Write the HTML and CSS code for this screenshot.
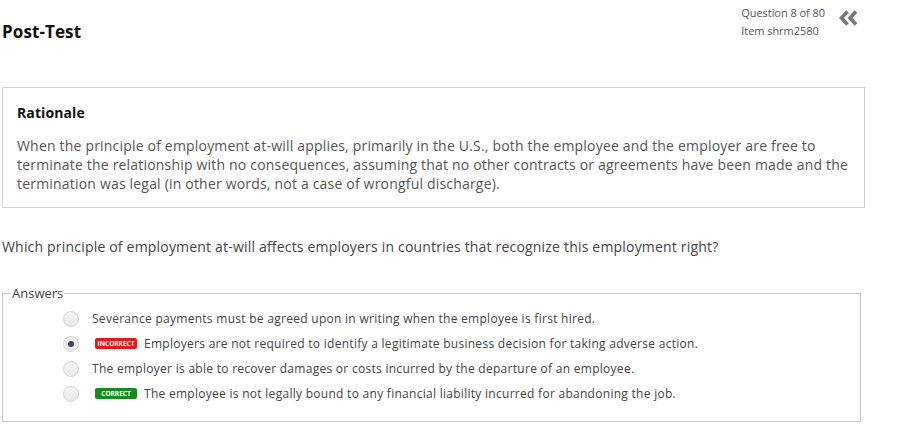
FILE: index.html
```html
<!DOCTYPE html>
<html>
<head>
<meta charset="utf-8">
<link rel="stylesheet" href="styles.css">
</head>
<body>
<div class="page">
  <header class="top">
    <h1 class="title">Post-Test</h1>
    <div class="meta">
      <div class="meta-text">
        <div>Question 8 of 80</div>
        <div>Item shrm2580</div>
      </div>
      <svg class="collapse" width="20" height="16" viewBox="0 0 20 16">
        <polyline points="8.5,1.5 2.5,8 8.5,14.5" fill="none" stroke="#777" stroke-width="3.6" stroke-linejoin="miter"/>
        <polyline points="17,1.5 11,8 17,14.5" fill="none" stroke="#777" stroke-width="3.6" stroke-linejoin="miter"/>
      </svg>
    </div>
  </header>

  <section class="rationale">
    <h2 class="rationale-title">Rationale</h2>
    <p class="rationale-text">When the principle of employment at-will applies, primarily in the U.S., both the employee and the employer are free to terminate the relationship with no consequences, assuming that no other contracts or agreements have been made and the termination was legal (in other words, not a case of wrongful discharge).</p>
  </section>

  <p class="question">Which principle of employment at-will affects employers in countries that recognize this employment right?</p>

  <fieldset class="answers">
    <legend>Answers</legend>
    <div class="answer">
      <span class="radio"></span>
      <span class="answer-text">Severance payments must be agreed upon in writing when the employee is first hired.</span>
    </div>
    <div class="answer">
      <span class="radio checked"></span>
      <span class="badge badge-incorrect">INCORRECT</span>
      <span class="answer-text">Employers are not required to identify a legitimate business decision for taking adverse action.</span>
    </div>
    <div class="answer">
      <span class="radio"></span>
      <span class="answer-text">The employer is able to recover damages or costs incurred by the departure of an employee.</span>
    </div>
    <div class="answer">
      <span class="radio"></span>
      <span class="badge badge-correct">CORRECT</span>
      <span class="answer-text">The employee is not legally bound to any financial liability incurred for abandoning the job.</span>
    </div>
  </fieldset>
</div>
</body>
</html>
```
FILE: styles.css
```css
html, body {
  margin: 0;
  padding: 0;
  background: #fff;
}
body {
  font-family: "Open Sans", "Liberation Sans", sans-serif;
  color: #444;
}
.page {
  width: 863px;
  padding: 0 0 0 2px;
}
.top {
  display: flex;
  justify-content: space-between;
  align-items: flex-start;
  height: 87px;
}
.title {
  margin: 20px 0 0 0;
  font-size: 17px;
  font-weight: 700;
  color: #111;
  line-height: 24px;
  letter-spacing: 0.1px;
}
.meta {
  display: flex;
  align-items: flex-start;
  gap: 14px;
  margin: 4px 6px 0 0;
}
.meta-text {
  font-size: 11px;
  line-height: 18px;
  color: #555;
  letter-spacing: -0.05px;
}
.collapse {
  margin-top: 6px;
}
.rationale {
  border: 1px solid #d2d2d2;
  padding: 15px 15px 14px 14px;
  width: 832px;
}
.rationale-title {
  margin: 0 0 13px 0;
  font-size: 14px;
  font-weight: 700;
  color: #111;
  line-height: 20px;
  letter-spacing: 0.1px;
}
.rationale-text {
  margin: 0;
  font-size: 14px;
  line-height: 19px;
  color: #555;
  letter-spacing: 0.19px;
}
.question {
  margin: 29px 0 0 0;
  font-size: 14px;
  line-height: 20px;
  color: #444;
  letter-spacing: 0.19px;
}
.answers {
  margin: 27px 0 0 0;
  width: 859px;
  border: 1px solid #c8c8c8;
  padding: 4px 0 10px 0;
  box-sizing: border-box;
  height: 138px;
}
.answers legend {
  margin-left: 8px;
  padding: 0 1px;
  font-size: 13px;
  color: #444;
}
.answer {
  display: flex;
  align-items: center;
  height: 25px;
  padding-left: 60px;
}
.radio {
  width: 14px;
  height: 14px;
  border: 1px solid #d4d4d4;
  border-radius: 50%;
  background: linear-gradient(#f6f6f6, #e8e8e8);
  margin-right: 13px;
  position: relative;
  flex: none;
}
.radio.checked::after {
  content: "";
  position: absolute;
  left: 4px;
  top: 4px;
  width: 6px;
  height: 6px;
  border-radius: 50%;
  background: #3d4a5c;
}
.badge {
  display: inline-block;
  font-size: 6.5px;
  font-weight: 700;
  color: #fff;
  line-height: 11px;
  width: 42px;
  text-align: center;
  border-radius: 2px;
  margin: 0 7px 0 3px;
  flex: none;
}
.badge-incorrect {
  background: #e0191c;
}
.badge-correct {
  background: #1a8a1f;
}
.answer-text {
  font-size: 12px;
  color: #444;
  white-space: nowrap;
  letter-spacing: 0.28px;
}
```
